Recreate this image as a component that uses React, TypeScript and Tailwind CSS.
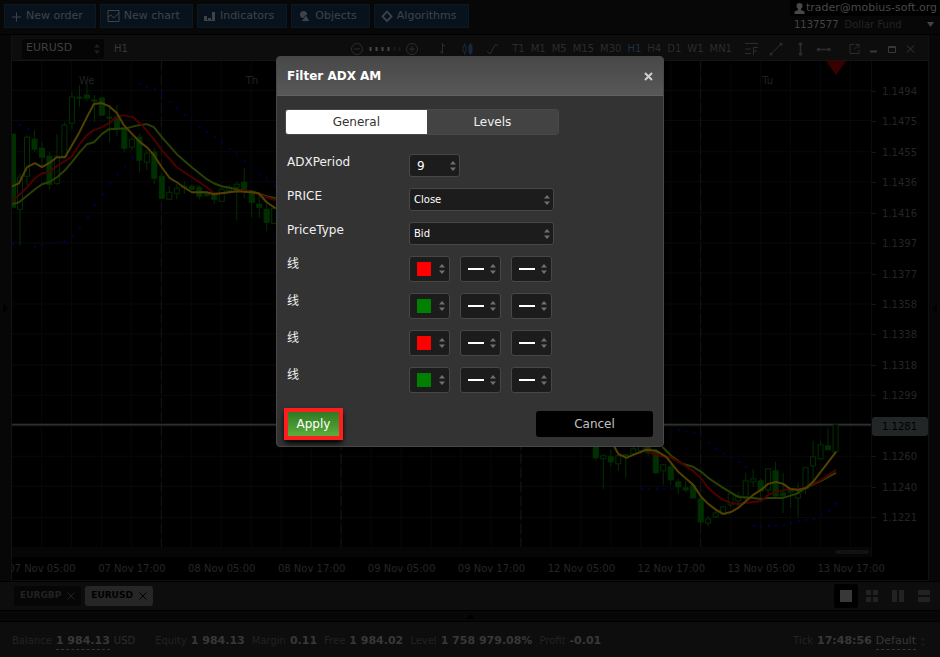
import { useState, type ReactNode } from "react";

type Candle = [x: number, high: number, top: number, bottom: number, low: number, filled: 0 | 1];

const candles: Candle[] = [
  [13, 134, 134, 207, 207, 1], [20, 173, 177, 209, 245, 0], [27, 135, 137, 176, 185, 0],
  [34.5, 130, 139, 149, 152, 1], [42, 142, 148, 157, 167, 1], [49.5, 152, 156, 184, 189, 1],
  [57, 134, 156, 183, 185, 0], [64.5, 122, 125, 156, 158, 0], [72, 92, 97, 123, 129, 0],
  [79.5, 85, 97, 98, 107, 1], [87, 83, 95, 98, 101, 1], [94.5, 95, 100, 101, 122, 1],
  [102, 97, 98, 115, 115, 1], [109.5, 107, 117, 118, 142, 1], [117, 105, 117, 128, 136, 1],
  [124.5, 127, 128, 148, 152, 1], [132, 136, 139, 147, 150, 0], [139.5, 133, 137, 160, 172, 1],
  [147, 150, 153, 162, 170, 0], [154.5, 148, 152, 178, 184, 1], [162, 172, 176, 198, 198, 1],
  [169.5, 186, 192, 199, 199, 0], [177, 184, 188, 193, 199, 0], [184.5, 181, 186, 187, 194, 1],
  [192, 184, 186, 189, 190, 1], [199.5, 185, 187, 196, 199, 1], [207, 192, 193, 195, 197, 1],
  [214.5, 192, 193, 199, 204, 1], [222, 187, 189, 201, 201, 0], [229.5, 185, 187, 190, 193, 0],
  [237, 182, 184, 187, 220, 0], [244.5, 168, 182, 191, 198, 1], [252, 190, 192, 202, 217, 1],
  [259.5, 195, 204, 207, 218, 1], [267, 204, 209, 222, 231, 1], [274.5, 207, 208, 223, 224, 0],
  [596.5, 440, 440, 457, 460, 1], [604, 453, 455, 458, 488, 0], [611.5, 449, 456, 461, 466, 1],
  [619, 453, 455, 463, 470, 0], [626.5, 453, 454, 455, 477, 1], [634, 445, 448, 453, 453, 0],
  [641.5, 440, 445, 450, 453, 0], [649, 440, 446, 452, 455, 1], [656.5, 448, 450, 472, 473, 1],
  [664, 463, 464, 470, 484, 0], [671.5, 463, 466, 479, 484, 1], [679, 478, 481, 486, 493, 1],
  [686.5, 480, 487, 489, 491, 1], [694, 483, 485, 497, 497, 1], [701.5, 498, 498, 521, 524, 1],
  [709, 515, 518, 522, 525, 0], [716.5, 508, 512, 516, 517, 0], [724, 505, 506, 513, 514, 0],
  [731.5, 492, 493, 504, 507, 0], [739, 491, 495, 500, 507, 0], [746.5, 472, 480, 496, 500, 0],
  [754, 468, 478, 481, 486, 0], [761.5, 478, 480, 490, 500, 1], [769, 468, 468, 489, 492, 0],
  [776.5, 461, 470, 495, 497, 1], [784, 472, 492, 495, 512, 1], [791.5, 488, 489, 491, 507, 1],
  [799, 482, 493, 497, 516, 0], [806.5, 466, 467, 488, 493, 0], [814, 440, 456, 465, 479, 0],
  [821.5, 440, 444, 458, 459, 0], [829, 427, 445, 449, 449, 1], [836.5, 424, 424, 451, 451, 0],
];

const lines = [
  {
    color: "#2a4000",
    points: [
      "12,204 19,202 35,189 42,184 49,182 57,177 65,170 72,162 79,153 87,144 94,142 102,134 109,129 127,128 139,125 147,124 154,127 162,137 177,154 192,167 207,179 214,183 222,186 237,189 245,191 252,191 267,196 276,198",
      "663,446 672,455 683,463 694,466 702,471 709,477 724,487 739,496 754,497 762,498 769,497 784,497 797,493 807,487 822,480 837,472",
    ],
  },
  {
    color: "#4c0000",
    points: [
      "12,200 19,195 27,187 35,178 42,173 49,172 57,166 65,161 72,156 79,145 87,135 94,130 102,127 109,123 117,117 123,115 133,117 143,126 154,139 162,150 177,167 192,177 207,187 214,193 222,193 245,190 252,192 267,197 276,200",
      "645,447 653,453 660,455 672,457 683,463 694,470 702,478 709,487 717,494 724,499 732,502 739,503 754,501 762,500 769,494 777,491 791,488 803,488 814,483 822,479 837,469",
    ],
  },
  {
    color: "#514200",
    points: [
      "12,186 19,183 27,167 35,163 42,167 49,163 57,157 65,157 72,145 79,133 87,117 94,104 102,103 109,106 117,113 124,125 139,141 147,147 154,155 162,167 170,178 177,182 184,187 192,192 207,192 214,194 229,192 237,191 252,192 259,193 267,202 276,208",
      "615,446 619,453 627,457 634,454 647,449 657,450 667,456 679,471 687,478 694,484 702,496 709,503 717,509 724,513 732,511 739,507 747,500 754,494 762,489 769,483 777,481 784,483 791,488 799,489 807,487 814,481 837,451",
    ],
  },
];

const dots = [
  [20, 125], [28, 129], [140, 84], [147, 87], [155, 89], [162, 94], [170, 102], [177, 108],
  [185, 115], [192, 120], [200, 127], [207, 132], [215, 137], [222, 143], [230, 149], [237, 154],
  [245, 161], [252, 168], [260, 174], [267, 178], [275, 186], [133, 158], [125, 166], [118, 174],
  [110, 183], [103, 194], [95, 205], [88, 217], [80, 228], [73, 236], [65, 241], [58, 242],
  [50, 243], [43, 245], [35, 247], [13, 244], [643, 488], [650, 488], [658, 488], [665, 488],
  [673, 488], [680, 429], [687, 431], [695, 432], [702, 435], [710, 442], [717, 448], [725, 453],
  [732, 457], [740, 461], [747, 466], [755, 525], [762, 525], [770, 525], [777, 525], [785, 524],
  [792, 522], [800, 520], [807, 519], [815, 518], [822, 513], [830, 510], [837, 503],
];

const prices = [
  "1.1494", "1.1475", "1.1455", "1.1436", "1.1416", "1.1397", "1.1377", "1.1358",
  "1.1338", "1.1318", "1.1299", "1.1281", "1.1260", "1.1240", "1.1221",
];

const times = [
  "07 Nov 05:00", "07 Nov 17:00", "08 Nov 05:00", "08 Nov 17:00", "09 Nov 05:00",
  "09 Nov 17:00", "12 Nov 05:00", "12 Nov 17:00", "13 Nov 05:00", "13 Nov 17:00",
];

const periods = ["T1", "M1", "M5", "M15", "M30", "H1", "H4", "D1", "W1", "MN1"];

const Arrows = ({ className = "text-[#707070]" }: { className?: string }) => (
  <svg width="6" height="10" viewBox="0 0 6 10" fill="currentColor" className={`pointer-events-none shrink-0 ${className}`}>
    <path d="M0 3.5 3 0l3 3.5zM0 6.5 3 10l3-3.5z" />
  </svg>
);

const TopButton = ({ icon, children }: { icon: ReactNode; children: ReactNode }) => (
  <button className="flex h-6 items-center gap-1 border border-[#0d1823] bg-[#08121c] pr-3 pl-1.5 text-[11px] text-[#3f4347]">
    {icon}
    {children}
  </button>
);

const Header = () => (
  <header className="flex items-start justify-between border-b border-black bg-[#070707]">
    <nav className="flex gap-1 px-1 pt-1 pb-1.5">
      <TopButton
        icon={
          <svg width="11" height="12" viewBox="0 0 11 12" fill="none" stroke="currentColor">
            <path d="M5.5 2.5v9M1 7h9" />
          </svg>
        }
      >
        New order
      </TopButton>
      <TopButton
        icon={
          <svg width="13" height="12" viewBox="0 0 13 12" fill="none" stroke="currentColor">
            <path d="M1 .5h11v11H1zM1 7l3-2 2.5 3L12 3" />
          </svg>
        }
      >
        New chart
      </TopButton>
      <TopButton
        icon={
          <svg width="12" height="12" viewBox="0 0 12 12" fill="currentColor">
            <path d="M0 6h3v4H0zM4 8h3v2H4zM8 2h3v8H8zM0 10h11v1H0z" />
          </svg>
        }
      >
        Indicators
      </TopButton>
      <TopButton
        icon={
          <svg width="13" height="12" viewBox="0 0 13 12" fill="currentColor">
            <circle cx="5.5" cy="4.5" r="3.5" />
            <path d="M8 5l4 6.500H3z" stroke="#08121c" strokeWidth=".8" />
          </svg>
        }
      >
        Objects
      </TopButton>
      <TopButton
        icon={
          <svg width="12" height="12" viewBox="0 0 12 12" fill="none" stroke="currentColor" strokeWidth="1.8">
            <path d="M6 1.500 10.500 6.500 6 11 1.500 6.500z" />
          </svg>
        }
      >
        Algorithms
      </TopButton>
    </nav>
    <div className="w-[150px] text-[#303030]">
      <div className="flex h-4 items-center gap-px bg-black pl-1 text-[11px] text-[#484848]">
        <svg width="11" height="12" viewBox="0 0 11 12" fill="currentColor" className="shrink-0">
          <circle cx="5.5" cy="4" r="3" />
          <path d="M4 6h3v2l3.500 1.500V12H.5V9.500L4 8z" />
        </svg>
        trader@mobius-soft.org
      </div>
      <button className="flex h-4 w-full items-center gap-1.5 pr-1.5 pl-1 text-[10px]">
        <span className="text-[#444]">1137577</span>
        <span className="text-[#242424]">Dollar Fund</span>
        <svg width="7" height="5" viewBox="0 0 7 5" fill="#444" className="ml-auto">
          <path d="M0 0h7L3.500 5z" />
        </svg>
      </button>
    </div>
  </header>
);

const ChartToolbar = () => (
  <div className="flex h-[26px] items-center border-b border-[#141414] bg-[#0d0d0d] pt-0.5 text-[#2c2c2c]">
    <button className="ml-2.5 flex h-5 w-[82px] items-center justify-between rounded-[3px] bg-[#050505] px-1 text-[11px] text-[#404040]">
      EURUSD
      <Arrows className="text-[#1f1f1f]" />
    </button>
    <span className="ml-2.5 text-[10px] text-[#383838]">H1</span>
    <div className="ml-auto flex items-center">
      <svg width="160" height="16" viewBox="0 0 160 16" fill="none" stroke="currentColor">
        <circle cx="9" cy="8" r="5.500" />
        <path d="M6 8h6" />
        <path d="M22.500 6v4M28.500 6v4M34.500 6v4M40.500 6v4" stroke="#484848" strokeWidth="2" />
        <path d="M46.500 6v4M51.500 6v4" stroke="#1a1a1a" strokeWidth="2" />
        <circle cx="64" cy="8" r="5.500" />
        <path d="M61 8h6M64 5v6" />
        <path d="M94.500 2v11M92 11h2.500M94.500 4.500H97" />
        <g stroke="#16283a">
          <path d="M116.500 2v12M122.500 2v12" />
          <path d="M115 5h3v6h-3z" fill="#0d0d0d" />
          <path d="M121 4h3v8h-3z" fill="#16283a" />
        </g>
        <path d="M139 10l3 3 5-9h3" />
      </svg>
      <div className="ml-1 flex gap-1.5 text-[10px]">
        {periods.map((p) => (
          <button key={p} className={p === "H1" ? "text-[#1c3147]" : "text-[#2c2c2c]"}>
            {p}
          </button>
        ))}
      </div>
      <svg width="184" height="16" viewBox="0 0 184 16" fill="none" stroke="currentColor" className="ml-3">
        <path d="M1 2.500h13M1 8h6M1 12.500h6M9.500 14V6.500H14M9.500 10H13" />
        <path d="M27 13 37 3" />
        <path d="M56.500 3v11M74 8.500h11" strokeWidth="1.500" />
        <g fill="currentColor" stroke="none">
          <circle cx="27" cy="13" r="1.500" />
          <circle cx="37" cy="3" r="1.500" />
          <circle cx="56.500" cy="3" r="1.800" />
          <circle cx="56.500" cy="13" r="1.800" />
          <circle cx="74.500" cy="8.500" r="1.800" />
          <circle cx="85" cy="8.500" r="1.800" />
        </g>
        <path d="M110 3.500h-4v9h9V9M110 8.500l5-5M111.500 3.500h3.500V7" />
        <path d="M126 10.500h7" strokeWidth="2" stroke="#383838" />
        <path d="M144.500 5.500h7v6h-7zM144.500 6.500h7" stroke="#383838" />
        <path d="M163 4.500l7 7M170 4.500l-7 7" stroke="#383838" />
      </svg>
    </div>
  </div>
);

const Plot = () => (
  <svg viewBox="12 61 860 485" preserveAspectRatio="none" className="absolute inset-0 size-full">
    <g stroke="#080808">
      {Array.from({ length: 28 }, (_, i) => (
        <path key={i} d={`M${41.5 + i * 30} 61v485`} />
      ))}
      {Array.from({ length: 15 }, (_, i) => (
        <path key={i} d={`M12 ${Math.round(91 + i * 30.4) - 0.5}h860`} />
      ))}
    </g>
    <path d="M161.500 61v485M341.500 61v485M521.500 61v485M701.500 61v485" stroke="#161616" strokeDasharray="10 4" />
    <path d="M12 424h860" stroke="#121414" strokeWidth="3" />
    <path d="M12 424h860" stroke="#353838" />
    <g stroke="#003000">
      {candles.map(([x, high, top, bottom, low, filled]) => (
        <g key={x}>
          <path d={`M${x} ${high}V${low}`} />
          <rect x={x - 2.5} y={top} width="5" height={bottom - top} fill={filled ? "#003000" : "#000"} />
        </g>
      ))}
    </g>
    {lines.map((line) =>
      line.points.map((points) => (
        <polyline key={points} points={points} fill="none" stroke={line.color} strokeWidth="2" strokeLinejoin="round" />
      )),
    )}
    {dots.map(([x, y]) => (
      <rect key={`${x}-${y}`} x={x - 1} y={y - 1} width="2" height="2" fill="#000050" />
    ))}
    <path d="M827 61h20l-10 14z" fill="#3a0000" />
    <g fill="#222" fontSize="10">
      <text x="79" y="84">We</text>
      <text x="246" y="84">Th</text>
      <text x="763" y="84">Tu</text>
    </g>
  </svg>
);

const Chart = () => (
  <section className="flex min-w-0 flex-1 flex-col border-x border-[#121212] bg-black">
    <ChartToolbar />
    <div className="flex flex-1">
      <div className="flex flex-1 flex-col border-r border-[#0c0c0c]">
        <div className="relative flex-1">
          <Plot />
        </div>
        <div className="flex h-2.5 items-center justify-end bg-[#060606] pr-0.5">
          <div className="h-1 w-[34px] rounded-sm bg-[#121212]" />
        </div>
      </div>
      <div className="flex w-14 flex-col pt-[15px] pb-6 text-[10px] text-[#252525]">
        {prices.map((price) => (
          <div key={price} className="flex flex-1 items-center">
            {price === "1.1281" ? (
              <span className="w-full rounded-[3px] bg-[#222626] py-0.5 pl-2.5 text-black">{price}</span>
            ) : (
              <>
                <span className="h-px w-1 bg-[#161616]" />
                <span className="pl-1.5">{price}</span>
              </>
            )}
          </div>
        ))}
      </div>
    </div>
    <div className="h-6 overflow-hidden border-b border-[#0d0d0d] pr-8">
      <div className="-ml-[15px] flex h-full items-center text-[10px] text-[#262626]">
        {times.map((time) => (
          <span key={time} className="flex-1 text-center whitespace-nowrap">
            {time}
          </span>
        ))}
      </div>
    </div>
  </section>
);

const Close = () => (
  <svg width="8" height="8" viewBox="0 0 8 8" stroke="currentColor" fill="none">
    <path d="M.5.5l7 7M7.500.5l-7 7" />
  </svg>
);

const TabBar = () => (
  <div className="flex h-[30px] items-center justify-between border-y border-black bg-[#0d0d0d] pr-1 pl-3.5 text-[9px] font-bold">
    <div className="flex gap-1">
      <div className="flex h-5 items-center gap-1.5 rounded-[3px] bg-[#060606] px-1.5 text-[#222]">
        EURGBP
        <button aria-label="Close EURGBP"><Close /></button>
      </div>
      <div className="flex h-5 items-center gap-1.5 rounded-[3px] bg-[#262626] px-1.5 text-black">
        EURUSD
        <button aria-label="Close EURUSD"><Close /></button>
      </div>
    </div>
    <div className="flex items-center gap-0.5 text-[#222]">
      <button aria-label="Single" className="flex size-6 items-center justify-center rounded-[3px] bg-black">
        <svg width="12" height="12" fill="#383838"><path d="M0 0h12v12H0z" /></svg>
      </button>
      <button aria-label="Grid" className="flex size-6 items-center justify-center">
        <svg width="12" height="12" fill="currentColor"><path d="M0 0h5v5H0zM7 0h5v5H7zM0 7h5v5H0zM7 7h5v5H7z" /></svg>
      </button>
      <button aria-label="Columns" className="flex size-6 items-center justify-center">
        <svg width="12" height="12" fill="currentColor"><path d="M0 0h5v12H0zM7 0h5v12H7z" /></svg>
      </button>
      <button aria-label="Rows" className="flex size-6 items-center justify-center">
        <svg width="12" height="12" fill="currentColor"><path d="M0 0h12v5H0zM0 7h12v5H0z" /></svg>
      </button>
    </div>
  </div>
);

const Stat = ({ label, value }: { label: string; value: string }) => (
  <span className="flex items-baseline gap-1">
    {label}
    <b className="text-[11px] text-[#383838]">{value}</b>
  </span>
);

const StatusBar = () => (
  <footer className="flex h-[35px] items-center bg-[#0d0d0d] pt-1 pr-3.5 pl-3 text-[10px] whitespace-nowrap text-[#222]">
    <span className="flex items-baseline gap-1">
      Balance
      <b className="border-b border-dashed border-[#333] text-[11px] leading-4 text-[#383838]">1 984.13</b>
      <span className="text-[#2c2c2c]">USD</span>
    </span>
    <div className="ml-5 flex gap-[7px]">
      <Stat label="Equity" value="1 984.13" />
      <Stat label="Margin" value="0.11" />
      <Stat label="Free" value="1 984.02" />
      <Stat label="Level" value="1 758 979.08%" />
      <Stat label="Profit" value="-0.01" />
    </div>
    <div className="ml-auto flex items-center gap-1">
      <Stat label="Tick" value="17:48:56" />
      <button className="border-b border-dashed border-[#333] text-[11px] leading-4 text-[#383838]">Default</button>
      <Arrows className="text-[#161616]" />
    </div>
  </footer>
);

const field = "rounded-[3px] border border-[#474747] bg-[#1c1c1c] text-white";

const SelectField = ({ id, label, options }: { id: string; label: string; options: string[] }) => (
  <div className="flex items-start">
    <label htmlFor={id} className="w-[122px]">
      {label}
    </label>
    <div className="relative">
      <select id={id} className={`h-[23px] w-[145px] appearance-none px-1 text-[10px] ${field}`}>
        {options.map((o) => (
          <option key={o}>{o}</option>
        ))}
      </select>
      <span className="pointer-events-none absolute inset-y-0 right-1 flex items-center">
        <Arrows />
      </span>
    </div>
  </div>
);

const Picker = ({ label, children }: { label: string; children: ReactNode }) => (
  <button
    aria-label={label}
    aria-haspopup="listbox"
    className={`flex h-[26px] w-[41px] items-center justify-between pr-1 pl-[7px] ${field}`}
  >
    {children}
    <Arrows />
  </button>
);

const LineRow = ({ color }: { color: string }) => (
  <div className="flex items-start">
    <span className="w-[122px]">线</span>
    <div className="flex gap-2.5">
      <Picker label="Color">
        <span className={`size-3.5 ${color}`} />
      </Picker>
      <Picker label="Width">
        <span className="h-0.5 w-4 bg-white" />
      </Picker>
      <Picker label="Style">
        <span className="h-0.5 w-4 bg-white" />
      </Picker>
    </div>
  </div>
);

const FilterDialog = () => {
  const [tab, setTab] = useState("General");
  const [period, setPeriod] = useState(9);

  return (
    <div className="fixed inset-0 flex items-start justify-center pt-14">
      <div
        role="dialog"
        aria-label="Filter ADX AM"
        className="w-[388px] rounded-[4px] border border-[#484848] bg-[#333] text-xs text-[#f0f0f0]"
      >
        <div className="flex h-[39px] items-center justify-between rounded-t-[3px] border-b border-[#606060] bg-linear-to-b from-[#484848] to-[#585858] px-2.5">
          <h2 className="font-bold text-white">Filter ADX AM</h2>
          <button aria-label="Close" className="text-[#d0d0d0]">
            <svg width="9" height="9" viewBox="0 0 9 9" fill="none" stroke="currentColor" strokeWidth="2">
              <path d="M1 1l7 7M8 1 1 8" />
            </svg>
          </button>
        </div>
        <div className="px-2 pt-[13px] pb-1.5">
          <div className="flex w-[274px] overflow-hidden rounded-[3px] border border-[#484848]">
            {["General", "Levels"].map((t) => (
              <button
                key={t}
                onClick={() => setTab(t)}
                className={`h-6 flex-auto ${tab === t ? "bg-white text-[#333]" : "bg-[#434343] text-[#f0f0f0]"}`}
              >
                {t}
              </button>
            ))}
          </div>
          <div className="flex flex-col gap-[11px] pt-[19px] pl-0.5">
            <div className="flex items-start">
              <label htmlFor="period" className="w-[122px]">
                ADXPeriod
              </label>
              <div className="relative">
                <input
                  id="period"
                  type="number"
                  value={period}
                  onChange={(e) => setPeriod(Number(e.target.value))}
                  className={`h-[23px] w-[51px] [appearance:textfield] pl-[7px] [&::-webkit-inner-spin-button]:appearance-none ${field}`}
                />
                <span className="pointer-events-none absolute inset-y-0 right-1 flex items-center">
                  <Arrows />
                </span>
              </div>
            </div>
            <SelectField id="price" label="PRICE" options={["Close", "Open", "High", "Low"]} />
            <SelectField id="price-type" label="PriceType" options={["Bid", "Ask"]} />
            <LineRow color="bg-[#ff0000]" />
            <LineRow color="bg-[#008000]" />
            <LineRow color="bg-[#ff0000]" />
            <LineRow color="bg-[#008000]" />
          </div>
          <div className="flex items-center justify-between pt-[15px]">
            <div className="-ml-px border-4 border-[#ff1e1e] shadow-md shadow-black">
              <button className="block h-6 w-[51px] bg-linear-to-b from-[#2f7a22] to-[#5cad3c] text-white">Apply</button>
            </div>
            <button className="mr-0.5 h-[26px] w-[117px] rounded-[3px] bg-black text-[#c0c0c0]">Cancel</button>
          </div>
        </div>
      </div>
    </div>
  );
};

const App = () => (
  <div className="flex min-h-screen flex-col bg-[#070707] font-['DejaVu_Sans','Noto_Sans_CJK_SC',sans-serif]">
    <Header />
    <main className="flex flex-1">
      <div className="flex w-[11px] items-center justify-center bg-[#070707]">
        <svg width="5" height="9" viewBox="0 0 5 9"><path d="M0 0l5 4.500L0 9z" /></svg>
      </div>
      <Chart />
      <div className="flex w-[11px] items-center justify-center bg-[#070707]">
        <svg width="5" height="9" viewBox="0 0 5 9"><path d="M5 0 0 4.500 5 9z" /></svg>
      </div>
    </main>
    <TabBar />
    <div className="flex h-[11px] items-center justify-center border-b border-black bg-[#070707]">
      <svg width="9" height="5" viewBox="0 0 9 5"><path d="M0 5l4.500-5L9 5z" /></svg>
    </div>
    <StatusBar />
    <FilterDialog />
  </div>
);

export default App;
